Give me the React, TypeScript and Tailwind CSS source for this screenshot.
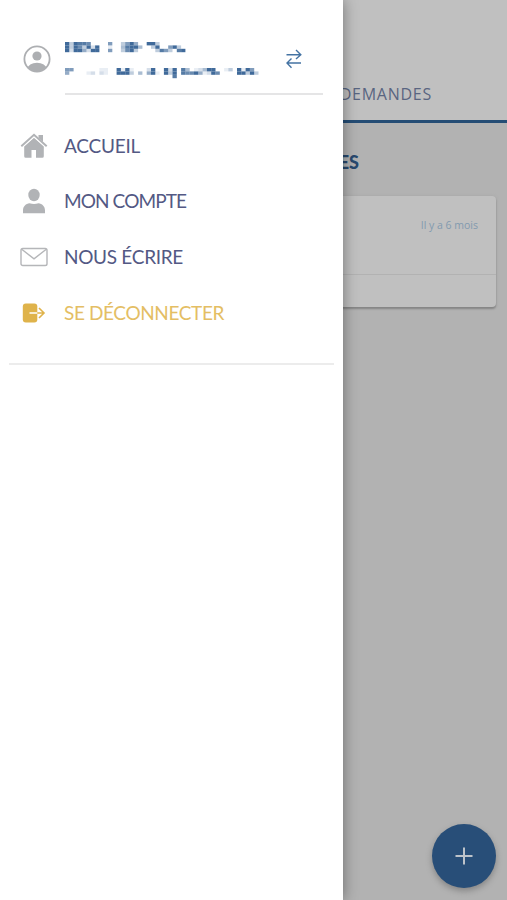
import React from "react";

const nameRows = [
  "9398870000600369500993000000",
  "9397392900100489940039006930",
  "9299529900600379300003863089",
];
const mailRows = [
  "660000001100919100029009290840124990013091960",
  "500001202100999304059109390877951297000099393",
  "000000000000000000000000080000000000000000000",
];

function Mosaic({ rows, step, height }: { rows: string[]; step: number; height: number }) {
  return (
    <svg width="210" height={height} className="block shrink-0" aria-hidden="true">
      {rows.flatMap((row, y) =>
        row.split("").map((v, x) =>
          v === "0" ? null : (
            <rect
              key={`${y}-${x}`}
              x={x * step}
              y={y * 3.4}
              width={step}
              height={3.4}
              fill="#2b5a8f"
              opacity={Number(v) / 10}
            />
          ),
        ),
      )}
    </svg>
  );
}

function Avatar() {
  return (
    <svg width="28" height="28" viewBox="0 0 28 28">
      <clipPath id="face">
        <circle cx="14" cy="14" r="12.5" />
      </clipPath>
      <circle cx="14" cy="11" r="4.6" fill="#adafb2" />
      <ellipse cx="14" cy="24" rx="9.5" ry="6.3" fill="#adafb2" clipPath="url(#face)" />
      <circle cx="14" cy="14" r="12.6" fill="none" stroke="#adafb2" strokeWidth="1.8" />
    </svg>
  );
}

function Swap() {
  return (
    <svg width="16" height="20" viewBox="0 0 16 20" fill="none" stroke="#4473a3" strokeWidth="1.4">
      <path d="M.5 5.8H14.5M10 1l4.8 4.8L10 10M15 14H1M5.5 9.5L1 14l4.5 4.7" />
    </svg>
  );
}

function Home() {
  return (
    <svg width="28" height="28" viewBox="0 0 28 28" fill="#b1b3b6">
      <path d="M18.5 3H23v8l-4.5-4Z" />
      <path d="M14 5.8L4.2 14.5V24.2q0 1.5 1.5 1.5H11.5V18h4.5v7.7h6.3q1.5 0 1.5-1.5V14.5Z" />
      <path d="M1.5 14.8L14 3.8 26.5 14.8" fill="none" stroke="#fff" strokeWidth="2.6" />
      <path d="M1.3 14.2L14 2.8 26.7 14.2" fill="none" stroke="#b1b3b6" strokeWidth="2" />
    </svg>
  );
}

function Person() {
  return (
    <svg width="28" height="28" viewBox="0 0 28 28" fill="#b1b3b6">
      <ellipse cx="14" cy="8" rx="5.7" ry="6.2" />
      <path d="M3 26.3v-2.7c0-4.5 3-6.8 6.5-7.3q4.5 1.3 9 0c3.5.5 6.5 2.8 6.5 7.3v2.7Z" />
    </svg>
  );
}

function Mail() {
  return (
    <svg width="28" height="28" viewBox="0 0 28 28" fill="none" stroke="#b5b6b9" strokeWidth="1.4">
      <rect x="1" y="5.5" width="26" height="17" rx="1.8" />
      <path d="M1.7 6.3L14 15.8 26.3 6.3" />
    </svg>
  );
}

function Logout() {
  return (
    <svg width="28" height="28" viewBox="0 0 28 28">
      <rect x="2.8" y="4.5" width="14.5" height="19" rx="3" fill="#dfb34b" />
      <path d="M9.5 14H17.3" stroke="#fff" strokeWidth="1.5" />
      <path d="M17.3 14h7M19 9l5 5-5 5" fill="none" stroke="#dfb34b" strokeWidth="1.6" />
    </svg>
  );
}

const items = [
  { label: "ACCUEIL", icon: <Home />, style: "text-[#535984] tracking-[-0.22px]" },
  { label: "MON COMPTE", icon: <Person />, style: "text-[#535984] tracking-[-0.9px]" },
  { label: "NOUS ÉCRIRE", icon: <Mail />, style: "text-[#535984] tracking-[-0.3px]" },
  { label: "SE DÉCONNECTER", icon: <Logout />, style: "text-[#e4be64] tracking-[-0.38px]" },
];

export default function App() {
  return (
    <div className="relative h-[900px] w-[507px] overflow-hidden bg-[#b2b2b2] font-['Lato','Liberation_Sans',sans-serif]">
      <header className="flex h-[123px] items-end justify-end border-b-[3px] border-[#254d75] bg-[#c0c0c0] pr-[75px] pb-[14px]">
        <span className="font-['Open_Sans',sans-serif] text-[16px] leading-6 tracking-[0.75px] text-[#596581]">
          DEMANDES
        </span>
      </header>
      <main className="pr-[11px]">
        <h2 className="pt-[27px] pr-[137px] text-right text-[18px] leading-6 font-black text-[#28496e]">
          MES DEMANDES
        </h2>
        <section className="mt-[22px] ml-[11px] h-[111px] rounded-[4px] bg-[#c0c0c0] shadow-[0_2px_2px_#858585,0_0_3px_#a5a5a5]">
          <div className="flex h-[79px] justify-end border-b border-[#b2b2b2] pt-[21px] pr-[18px]">
            <span className="font-['Open_Sans',sans-serif] text-[10.5px] leading-4 text-[#829aaf]">
              Il y a 6 mois
            </span>
          </div>
        </section>
      </main>
      <button
        aria-label="Ajouter"
        className="absolute top-[824px] left-[432px] flex size-16 items-center justify-center rounded-full bg-[#284e78] shadow-[0_3px_6px_#858585]"
      >
        <svg width="18" height="18" viewBox="0 0 18 18" stroke="#bdc3ca" strokeWidth="2">
          <path d="M9 .5v17M.5 9h17" />
        </svg>
      </button>
      <aside className="absolute inset-y-0 left-0 w-[343px] bg-white shadow-[0_0_14px_rgba(0,0,0,0.4)]">
        <div className="flex h-[95px] pl-[22.5px]">
          <div className="mt-[45px] w-[42px] shrink-0">
            <Avatar />
          </div>
          <div className="flex h-[95px] w-[258px] justify-between border-b-2 border-[#e5e5e6]">
            <div className="flex flex-col gap-[15px] pt-[42px]">
              <Mosaic rows={nameRows} step={4.3} height={11} />
              <Mosaic rows={mailRows} step={4.3} height={11} />
            </div>
            <div className="mt-[49px] mr-[21px]">
              <Swap />
            </div>
          </div>
        </div>
        <nav className="mx-[9px] flex h-[270px] flex-col border-b-2 border-[#ececec] pt-[23px]">
          {items.map(({ label, icon, style }) => (
            <a key={label} className="flex h-[55.6px] items-center gap-[16px] pl-[11px]">
              {icon}
              <span className={`text-[19px] leading-6 ${style}`}>{label}</span>
            </a>
          ))}
        </nav>
      </aside>
    </div>
  );
}
